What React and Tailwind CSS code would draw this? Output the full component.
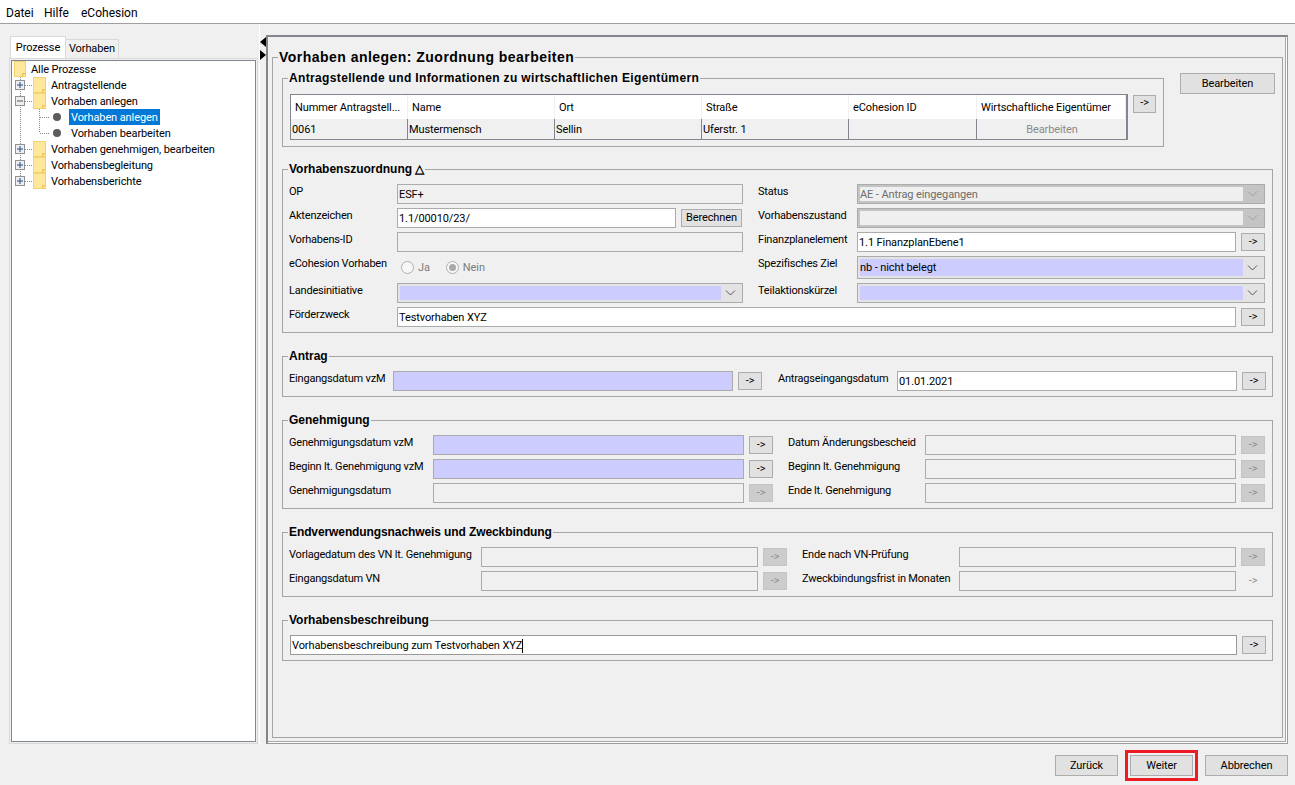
import React from "react";

const Lab = ({ w, children, className = "" }) => (
  <div className={`shrink-0 text-[11px] tracking-[-0.2px] leading-[15px] whitespace-nowrap ${className}`} style={w ? { width: w } : undefined}>{children}</div>
);

const Field = ({ on, tint, children, className = "" }) => (
  <div className={`h-5 border border-[#ababab] px-[1px] text-[11px] leading-[19px] whitespace-nowrap overflow-hidden ${on ? "bg-white" : tint ? "bg-[#ccccff]" : "bg-[#f0f0f0]"} ${className}`}>{children}</div>
);

const Arrow = ({ off, bare }) => (
  <div className={`w-6 h-[18px] mt-[1px] ml-[5px] shrink-0 border text-center text-[11px] leading-[15px] ${bare ? "border-transparent text-[#8a8a8a]" : off ? "border-[#c4c4c4] bg-[#cccccc] text-[#8c8c8c]" : "border-[#adadad] bg-[#e1e1e1] text-black"}`}>-&gt;</div>
);

const Chevron = ({ off }) => (
  <svg width="11" height="6" viewBox="0 0 11 6" className="shrink-0">
    <path d="M1 0.5 L5.5 5 L10 0.5" fill="none" stroke={off ? "#a0a0a0" : "#555555"} strokeWidth="1" />
  </svg>
);

const Combo = ({ off, children, tall }) => (
  <div className={`${tall ? "h-[23px]" : "h-5"} w-[408px] flex items-stretch border border-[#ababab] p-[2px] ${off ? "bg-[#c4c4c4]" : "bg-[#e3e3e3]"}`}>
    <div className={`flex-1 text-[11px] whitespace-nowrap ${tall ? "leading-[17px]" : "leading-[15px]"} ${off ? "bg-[#efefef] text-[#6d6d6d]" : "bg-[#ccccff] text-black"}`}>{children}</div>
    <div className="w-[19px] flex items-center justify-center"><Chevron off={off} /></div>
  </div>
);

const Box = ({ title, big, className = "", inner = "", tracking = "tracking-normal", children }) => (
  <fieldset className={`border border-[#a5a5a5] min-w-0 ${className}`}>
    <legend className={`ml-[5px] px-[1px] font-bold text-black whitespace-nowrap font-['Liberation_Sans',Arial,sans-serif] ${big ? "text-[14px] leading-[18px]" : "text-[12px] leading-4"} ${tracking}`}>{title}</legend>
    <div className={inner}>{children}</div>
  </fieldset>
);

const Btn = ({ w, children, className = "" }) => (
  <div className={`h-[21px] shrink-0 border border-[#adadad] bg-[#e1e1e1] text-center text-[11px] leading-[19px] ${className}`} style={{ width: w }}>{children}</div>
);

const Dot = ({ x1, y1, x2, y2 }) => (
  <line x1={x1} y1={y1} x2={x2} y2={y2} stroke="#8a8a8a" strokeDasharray="1 1" />
);

const Folder = ({ x, w = 12 }) => (
  <g>
    <rect x={x + 0.5} y="0.5" width={w} height="15" fill="#ffe79c" stroke="#f3d26f" />
    <path d={`M${x + w - 2.5} 15.5 V12.5 H${x + w + 0.5}`} fill="#fbd768" stroke="#eec455" />
  </g>
);

const Expander = ({ open }) => (
  <g>
    <rect x="3.5" y="3.5" width="9" height="9" fill="#eeeeee" stroke="#919191" />
    <line x1="5" y1="8" x2="11" y2="8" stroke={open ? "#555555" : "#2b4a8c"} />
    {!open && <line x1="8" y1="5" x2="8" y2="11" stroke="#2b4a8c" />}
  </g>
);

const Row = ({ kind, label, open, last, selected, subLast }) => {
  if (kind === "root")
    return (
      <div className="h-4 flex items-center">
        <svg width="19" height="16" className="shrink-0"><Folder x={2} w={11} /></svg>
        <span className="h-4 pt-[1px] text-[11px] leading-[15px] whitespace-nowrap">{label}</span>
      </div>
    );
  if (kind === "leaf")
    return (
      <div className="h-4 flex items-center">
        <svg width="57" height="16" className="shrink-0">
          <Dot x1="8.5" y1="0" x2="8.5" y2="16" />
          <Dot x1="27.5" y1="0" x2="27.5" y2={subLast ? 8 : 16} />
          <Dot x1="28" y1="8.5" x2="38" y2="8.5" />
          <circle cx="45" cy="8" r="4" fill="#5c5c5c" />
        </svg>
        <span className={`h-4 pt-[1px] text-[11px] leading-[15px] whitespace-nowrap px-[2px] ${selected ? "bg-[#0078d7] text-white" : ""}`}>{label}</span>
      </div>
    );
  return (
    <div className="h-4 flex items-center">
      <svg width="38" height="16" className="shrink-0">
        <Dot x1="8.5" y1="0" x2="8.5" y2={last ? 8 : 16} />
        <Dot x1="9" y1="8.5" x2="20" y2="8.5" />
        <Expander open={open} />
        <Folder x={21} />
      </svg>
      <span className="h-4 pt-[1px] text-[11px] leading-[15px] whitespace-nowrap pl-[1px]">{label}</span>
    </div>
  );
};

const Radio = ({ checked, children, className = "" }) => (
  <div className={`flex items-center gap-[4px] text-[11px] text-[#7d7d7d] ${className}`}>
    <span className="w-[13px] h-[13px] rounded-full border border-[#b0b0b0] bg-[#f7f7f7] flex items-center justify-center">
      {checked && <span className="w-[7px] h-[7px] rounded-full bg-[#a8a8a8]" />}
    </span>
    <span className="pt-[1px]">{children}</span>
  </div>
);

const heads = ["Nummer Antragstell...", "Name", "Ort", "Straße", "eCohesion ID", "Wirtschaftliche Eigentümer"];
const cells = ["0061", "Mustermensch", "Sellin", "Uferstr. 1", "", "Bearbeiten"];
const sec = "pl-[6px] pb-[5px] pt-[7px]";

export default function App() {
  return (
    <div className="w-[1295px] h-[785px] overflow-hidden bg-[#f0f0f0] text-black flex flex-col tracking-[-0.1px] font-['Roboto',Arial,sans-serif]">
      <div className="h-6 shrink-0 bg-white border-b border-[#a0a0a0] flex items-center pl-[6px] text-[12px] tracking-normal pt-[3px]">
        <span className="w-[38px]">Datei</span>
        <span className="w-[37px]">Hilfe</span>
        <span>eCohesion</span>
      </div>

      <div className="h-[721px] shrink-0 flex">
        <div className="w-[260px] shrink-0 pl-[9px] pr-[1px] pt-[12px] pb-[1px] flex flex-col border-r border-white">
          <div className="flex items-end h-[22px] pl-[1px]">
            <div className="w-[56px] h-[22px] bg-white border border-b-0 border-[#d9d9d9] text-center text-[11px] leading-[21px]">Prozesse</div>
            <div className="w-[53px] h-[19px] bg-[#f0f0f0] border border-l-0 border-b-0 border-[#d9d9d9] text-center text-[11px] leading-[18px]">Vorhaben</div>
          </div>
          <div className="flex-1 border border-[#d9d9d9] p-[1px]">
            <div className="h-full border border-[#82878f] bg-white">
              <Row kind="root" label="Alle Prozesse" />
              <Row label="Antragstellende" />
              <Row label="Vorhaben anlegen" open />
              <Row kind="leaf" label="Vorhaben anlegen" selected />
              <Row kind="leaf" label="Vorhaben bearbeiten" subLast />
              <Row label="Vorhaben genehmigen, bearbeiten" />
              <Row label="Vorhabensbegleitung" />
              <Row label="Vorhabensberichte" last />
            </div>
          </div>
        </div>

        <div className="w-[6px] shrink-0 pt-[13px] flex flex-col gap-[3px]">
          <svg width="6" height="10" viewBox="0 0 6 10"><path d="M6 0 V10 L0 5 Z" fill="#000" /></svg>
          <svg width="6" height="10" viewBox="0 0 6 10"><path d="M0 0 V10 L6 5 Z" fill="#000" /></svg>
        </div>

        <div className="w-[1022px] shrink-0 mt-[11px] h-[709px] border-l-2 border-t-2 border-r border-b border-[#85858b] border-r-[#9a9aa0] border-b-[#9a9aa0]">
          <div className="h-full border-r border-b border-white">
            <div className="h-full border-r border-b border-[#a8a8a8] pl-[4px] pr-[2px] pt-[11px]">
              <Box big title="Vorhaben anlegen: Zuordnung bearbeiten" tracking="tracking-[0.47px]" className="h-[690px]" inner="px-[9px] pt-[4px]">
                <div className="flex items-start mb-[14px]">
                  <Box title="Antragstellende und Informationen zu wirtschaftlichen Eigentümern" tracking="tracking-[0.35px]" className="w-[882px] shrink-0" inner="pl-[7px] pt-[8px] pb-[6px]">
                    <div className="flex items-start">
                      <div className="w-[838px] border border-[#82878f] border-r-2">
                        <div className="grid grid-cols-[117px_147px_147px_147px_128px_149px] h-6">
                          {heads.map((h) => (
                            <div key={h} className="bg-white border-r border-[#f0f0f0] pl-[4px] text-[11px] leading-[26px] whitespace-nowrap overflow-hidden">{h}</div>
                          ))}
                        </div>
                        <div className="grid grid-cols-[117px_147px_147px_147px_128px_149px] h-5 bg-[#f0f0f0]">
                          {cells.map((c, i) => (
                            <div key={i} className={`pl-[1px] text-[11px] leading-[21px] whitespace-nowrap ${i < 5 ? "border-r border-[#82878f]" : "text-center text-[#8a8a8a]"}`}>{c}</div>
                          ))}
                        </div>
                      </div>
                      <div className="w-[23px] h-[18px] ml-[5px] mt-[1px] border border-[#adadad] bg-[#e1e1e1] text-center text-[11px] leading-[14px]">-&gt;</div>
                    </div>
                  </Box>
                  <Btn w={95} className="ml-[16px] mt-[3px]">Bearbeiten</Btn>
                </div>

                <Box title="Vorhabenszuordnung △" className="mb-[15px]" inner={sec}>
                  <div className="grid grid-cols-[454px_507px] gap-x-[15px] gap-y-1 grid-rows-[20px_20px_20px_23px_20px_20px]">
                    <div className="flex"><Lab w={108}>OP</Lab><Field className="flex-1">ESF+</Field></div>
                    <div className="flex"><Lab w={99}>Status</Lab><Combo off>AE - Antrag eingegangen</Combo></div>

                    <div className="flex"><Lab w={108}>Aktenzeichen</Lab><Field on className="w-[279px]">1.1/00010/23/</Field><Btn w={61} className="ml-[5px] !h-[18px] mt-[1px] !leading-[16px]">Berechnen</Btn></div>
                    <div className="flex"><Lab w={99}>Vorhabenszustand</Lab><Combo off /></div>

                    <div className="flex"><Lab w={108}>Vorhabens-ID</Lab><Field className="flex-1" /></div>
                    <div className="flex"><Lab w={99}>Finanzplanelement</Lab><Field on className="w-[380px]">1.1 FinanzplanEbene1</Field><Arrow /></div>

                    <div className="flex"><Lab w={112}>eCohesion Vorhaben</Lab><Radio className="h-[23px]">Ja</Radio><Radio checked className="h-[23px] ml-[16px]">Nein</Radio></div>
                    <div className="flex"><Lab w={99}>Spezifisches Ziel</Lab><Combo tall>nb - nicht belegt</Combo></div>

                    <div className="flex"><Lab w={108}>Landesinitiative</Lab><div className="flex-1 h-5 flex items-stretch border border-[#ababab] bg-[#e3e3e3] p-[2px]"><div className="flex-1 bg-[#ccccff]" /><div className="w-[19px] flex items-center justify-center"><Chevron /></div></div></div>
                    <div className="flex"><Lab w={99}>Teilaktionskürzel</Lab><Combo /></div>

                    <div className="flex col-span-2"><Lab w={108}>Förderzweck</Lab><Field on className="w-[840px]">Testvorhaben XYZ</Field><Arrow /></div>
                  </div>
                </Box>

                <Box title="Antrag" className="mb-[15px]" inner={sec}>
                  <div className="flex">
                    <Lab w={104}>Eingangsdatum vzM</Lab>
                    <Field tint className="w-[340px]" />
                    <Arrow />
                    <Lab w={119} className="ml-[16px]">Antragseingangsdatum</Lab>
                    <Field on className="w-[340px]">01.01.2021</Field>
                    <Arrow />
                  </div>
                </Box>

                <Box title="Genehmigung" className="mb-[15px]" inner={sec}>
                  <div className="flex flex-col gap-1">
                    <div className="flex"><Lab w={144}>Genehmigungsdatum vzM</Lab><Field tint className="w-[311px]" /><Arrow /><Lab w={137} className="ml-[15px]">Datum Änderungsbescheid</Lab><Field className="w-[311px]" /><Arrow off /></div>
                    <div className="flex"><Lab w={144}>Beginn lt. Genehmigung vzM</Lab><Field tint className="w-[311px]" /><Arrow /><Lab w={137} className="ml-[15px]">Beginn lt. Genehmigung</Lab><Field className="w-[311px]" /><Arrow off /></div>
                    <div className="flex"><Lab w={144}>Genehmigungsdatum</Lab><Field className="w-[311px]" /><Arrow off /><Lab w={137} className="ml-[15px]">Ende lt. Genehmigung</Lab><Field className="w-[311px]" /><Arrow off /></div>
                  </div>
                </Box>

                <Box title="Endverwendungsnachweis und Zweckbindung" tracking="tracking-[-0.1px]" className="mb-[15px]" inner={sec}>
                  <div className="flex flex-col gap-1">
                    <div className="flex"><Lab w={192}>Vorlagedatum des VN lt. Genehmigung</Lab><Field className="w-[277px]" /><Arrow off /><Lab w={157} className="ml-[15px]">Ende nach VN-Prüfung</Lab><Field className="w-[277px]" /><Arrow off /></div>
                    <div className="flex"><Lab w={192}>Eingangsdatum VN</Lab><Field className="w-[277px]" /><Arrow off /><Lab w={157} className="ml-[15px]">Zweckbindungsfrist in Monaten</Lab><Field className="w-[277px]" /><Arrow bare /></div>
                  </div>
                </Box>

                <Box title="Vorhabensbeschreibung" inner="pl-[7px] pb-[5px] pt-[7px]">
                  <div className="flex">
                    <Field on className="w-[947px] !border-[#9a9a9a]">Vorhabensbeschreibung zum Testvorhaben XYZ<span className="inline-block w-[1px] h-[14px] bg-black align-middle" /></Field>
                    <Arrow />
                  </div>
                </Box>
              </Box>
            </div>
          </div>
        </div>
      </div>

      <div className="flex justify-end items-start gap-[7px] pr-[7px] pt-[5px]">
        <Btn w={63} className="mt-[5px]">Zurück</Btn>
        <div className="border-[3px] border-[#ed1c24] p-[2px]"><Btn w={63}>Weiter</Btn></div>
        <Btn w={83} className="mt-[5px]">Abbrechen</Btn>
      </div>
    </div>
  );
}
